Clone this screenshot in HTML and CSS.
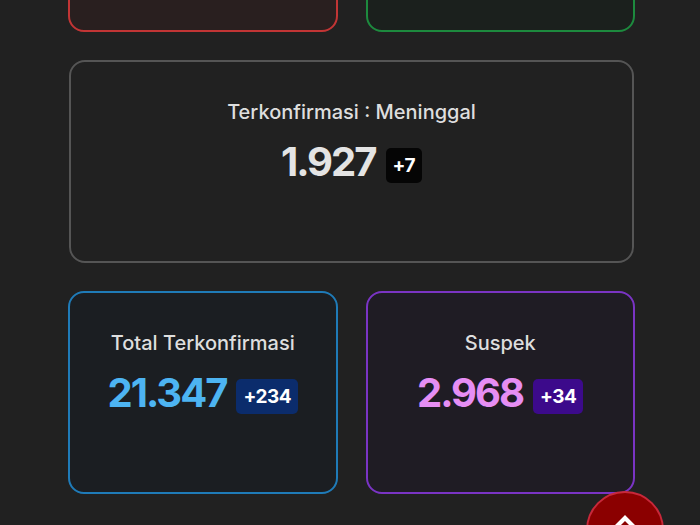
FILE: index.html
```html
<!DOCTYPE html>
<html>
<head>
  <title>Data Covid</title>
  <link rel="stylesheet" href="styles.css">
</head>
<body>

  <div class="stats">
    <!-- scrolled past: only the lower edge of these two shows -->
    <div class="card card-red"></div>
    <div class="card card-green"></div>

    <div class="card card-wide">
      <p class="card-title">Terkonfirmasi : Meninggal</p>
      <div class="card-value">
        <span class="number">1.927</span>
        <span class="badge">+7</span>
      </div>
    </div>

    <div class="card card-blue">
      <p class="card-title">Total Terkonfirmasi</p>
      <div class="card-value">
        <span class="number">21.347</span>
        <span class="badge">+234</span>
      </div>
    </div>

    <div class="card card-purple">
      <p class="card-title">Suspek</p>
      <div class="card-value">
        <span class="number">2.968</span>
        <span class="badge">+34</span>
      </div>
    </div>
  </div>

  <button class="to-top" title="Kembali ke atas">
    <svg width="22" height="14" viewBox="0 0 22 14">
      <path d="M11 0 L22 11 L19 14 L11 6 L3 14 L0 11 Z" fill="#fff"/>
    </svg>
  </button>

</body>
</html>
```

FILE: styles.css
```css
body {
  margin: 0;
  background: #212121;
  font-family: 'Inter', 'Noto Sans', sans-serif;
  color: #e2e2e2;
  overflow: hidden;
}

.stats {
  display: grid;
  grid-template-columns: 1fr 1fr;
  column-gap: 28px;
  row-gap: 28px;
  width: 567px;
  margin: -167px 0 0 68px;
}

.card {
  height: 199px;
  border: 2px solid #555;
  border-radius: 16px;
  padding-top: 38px;
  box-sizing: border-box;
  text-align: center;
}

.card-wide {
  grid-column: span 2;
  height: 203px;
  margin: 0 1px;
  background: #212121;
}

.card-red {
  background: #291f1f;
  border-color: #c23535;
}

.card-green {
  background: #1b201d;
  border-color: #1d8a3e;
}

.card-blue {
  height: 203px;
  background: #1b1e22;
  border-color: #1f7bb8;
}

.card-purple {
  height: 203px;
  background: #1f1c24;
  border-color: #7a34c4;
}

.card-title {
  margin: 0;
  font-size: 20px;
  font-weight: 500;
  color: #dedede;
}

.card-value {
  display: flex;
  justify-content: center;
  align-items: center;
  gap: 10px;
  margin-top: 13px;
}

.number {
  font-size: 40px;
  font-weight: 700;
  letter-spacing: -2px;
  color: #e4e4e4;
}

.badge {
  margin-top: 8px;
  padding: 6px 7px;
  border-radius: 5px;
  background: #050505;
  color: #fff;
  font-size: 19px;
  font-weight: 700;
  letter-spacing: -0.5px;
}

.card-blue .number {
  color: #4db4f2;
}

.card-blue .badge {
  background: #0b2c6c;
}

.card-purple .number {
  color: #e68ef4;
}

.card-purple .badge {
  background: #3c0a8b;
}

.to-top {
  position: fixed;
  right: 36px;
  bottom: -44px;
  width: 78px;
  height: 78px;
  border-radius: 50%;
  border: 2px solid #c8283a;
  background: #8b0000;
  padding: 0;
  display: flex;
  align-items: flex-start;
  justify-content: center;
  cursor: pointer;
}

.to-top svg {
  margin-top: 22px;
}
```
